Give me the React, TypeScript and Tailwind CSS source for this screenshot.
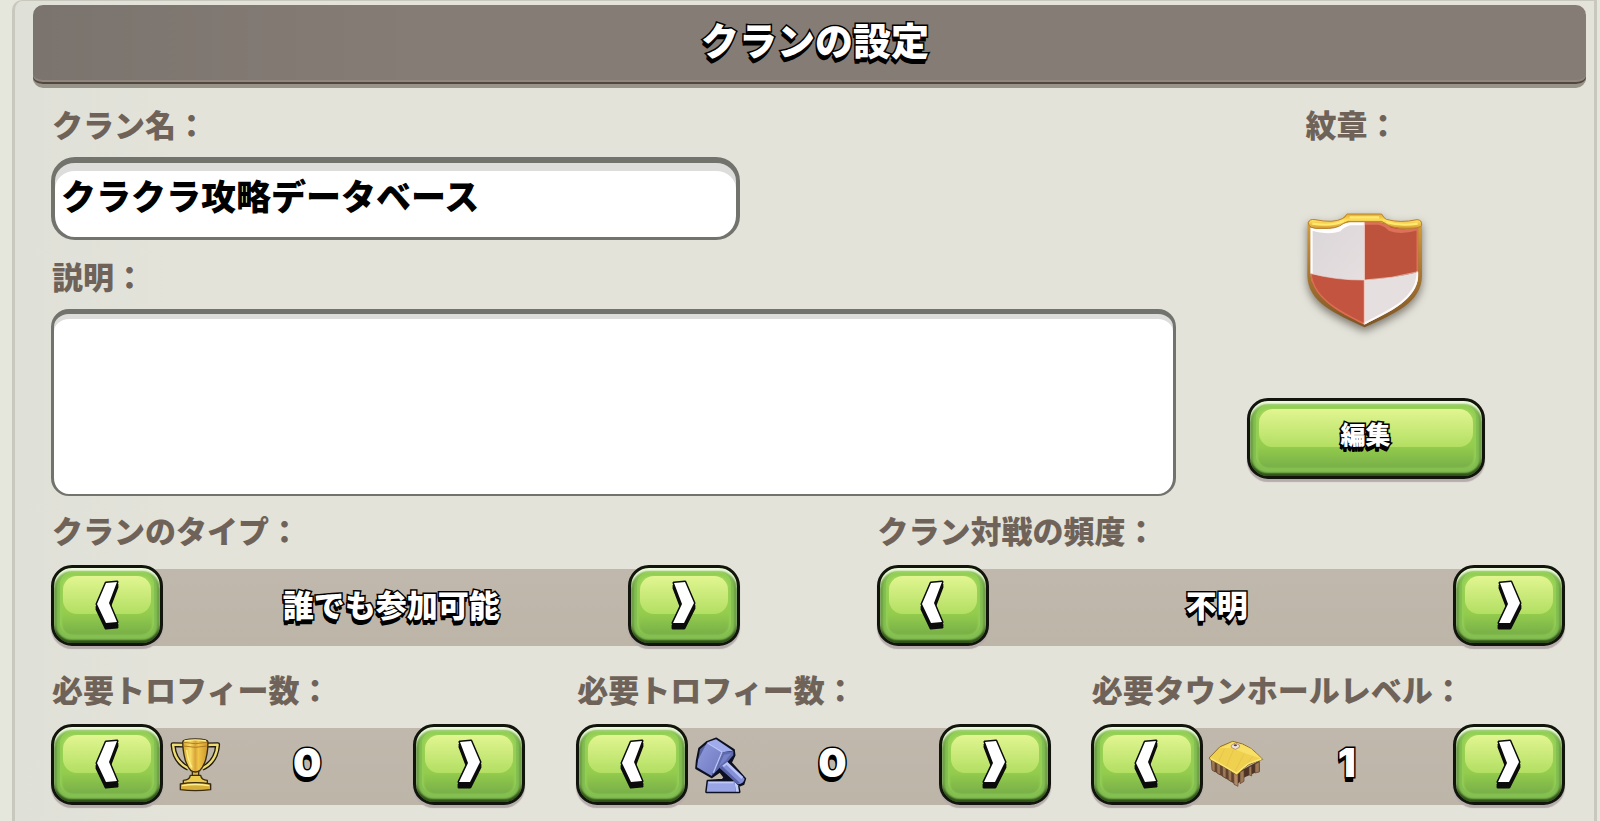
import React, { useState } from 'react';
import clsx from 'clsx';

const OUTLINED =
  'text-white [-webkit-text-stroke:3px_#000] [paint-order:stroke_fill] [text-shadow:-1px_2px_0_#000,-1px_4px_0_#000,-1px_5px_0_#000]';

const LABEL = 'block h-8 pl-px text-[31px] leading-7 font-black text-[#6f6359] whitespace-nowrap';

const FIELD = 'block w-full bg-white border-[#72736d] outline-none resize-none';

function GreenButton({
  label,
  className,
  onClick,
  children,
}: {
  label?: string;
  className?: string;
  onClick?: () => void;
  children: React.ReactNode;
}) {
  return (
    <button
      type="button"
      aria-label={label}
      onClick={onClick}
      className={clsx(
        'relative flex h-[81px] shrink-0 cursor-pointer items-center justify-center rounded-[21px] border-[3px] border-[#11150c]',
        'bg-linear-to-b from-[#a5d95c] via-[#94cd4d] via-60% to-[#6ea446]',
        'shadow-[0_3px_1px_#b5acab,inset_0_3px_2px_#f0fae0,inset_0_-3px_2px_#2f5219,inset_3px_0_2px_#6b9f40,inset_-3px_0_2px_#6b9f40,inset_0_-2px_0_6px_#84bf52,inset_0_0_2px_8px_#93cf55]',
        className
      )}
    >
      <span className="absolute inset-x-[9px] top-[8px] h-[38px] rounded-[14px] bg-linear-to-b from-[#e2f591] to-[#b2df62]" />
      <span className="relative">{children}</span>
    </button>
  );
}

function Chevron({ right }: { right?: boolean }) {
  const points = right ? '3,4 14,3 23,24 13,44 2,44 11,25' : '11,4 22,3 14,24 22,43 11,44 2,25';
  return (
    <svg width="25" height="53" viewBox="0 0 25 53" aria-hidden="true">
      <g fill="#0b0b0b" stroke="#0b0b0b" strokeWidth="3" strokeLinejoin="round">
        <polygon points={points} />
        <polygon points={points} transform="translate(0 3)" />
        <polygon points={points} transform="translate(0 5)" />
      </g>
      <polygon points={points} fill="#fff" />
    </svg>
  );
}

function Shield() {
  return (
    <svg
      width="122"
      height="130"
      viewBox="190 365 366 390"
      className="drop-shadow-[0_4px_4px_rgba(60,50,40,0.6)]"
      aria-hidden="true"
    >
      <defs>
        <linearGradient id="rim" x1="0" y1="0" x2="0" y2="1">
          <stop offset="0" stopColor="#d9a638" />
          <stop offset="0.35" stopColor="#b98337" />
          <stop offset="1" stopColor="#7d5525" />
        </linearGradient>
        <linearGradient id="rimTop" x1="0" y1="0" x2="0" y2="1">
          <stop offset="0" stopColor="#e2ab35" />
          <stop offset="0.45" stopColor="#ffe25c" />
          <stop offset="1" stopColor="#d99b32" />
        </linearGradient>
        <linearGradient id="silver" x1="0" y1="0" x2="1" y2="1">
          <stop offset="0" stopColor="#d9d5d8" />
          <stop offset="1" stopColor="#e7dfe0" />
        </linearGradient>
        <clipPath id="field">
          <path d="M206 415 Q250 424 285 413 Q303 403 325 399 H411 Q434 403 455 413 Q485 424 530 415 V560 C525 630 450 665 368 706 C285 665 211 625 206 550 Z" />
        </clipPath>
      </defs>
      <path
        d="M198 398 Q204 388 220 392 Q270 402 298 390 L316 374 H420 L432 390 Q475 402 524 392 Q540 390 541 402 V560 C539 640 460 672 369 714 C280 672 200 640 197 560 Z"
        fill="url(#rim)"
      />
      <g clipPath="url(#field)">
        <rect x="200" y="380" width="170" height="200" fill="url(#silver)" />
        <rect x="368" y="380" width="170" height="200" fill="#bd533d" />
        <path d="M200 551 Q285 573 369 572 V720 H200 Z" fill="#c35440" />
        <path d="M368 572 Q450 568 535 547 V720 H368 Z" fill="#e6dfdf" />
        <path
          d="M206 553 V415 Q258 432 292 420 Q303 407 325 401 H368"
          fill="none"
          stroke="#fffdfd"
          strokeWidth="14"
        />
        <path
          d="M368 401 H411 Q434 407 445 420 Q480 432 530 417 V547"
          fill="none"
          stroke="#dc7059"
          strokeWidth="11"
        />
        <path d="M206 553 C211 625 285 665 368 706" fill="none" stroke="#dd6e52" strokeWidth="9" />
        <path d="M530 547 V560 C525 630 450 665 368 706" fill="none" stroke="#fffafa" strokeWidth="12" />
        <path d="M206 552 Q285 573 369 572 Q450 568 530 547" fill="none" stroke="#ecd0ca" strokeWidth="2" />
        <path d="M368 395 V706" stroke="#f2cdc5" strokeWidth="3" />
      </g>
      <path
        d="M200 400 Q204 388 220 391 Q275 402 302 388 Q314 382 314 376 Q316 373 320 374 H416 Q421 373 422 377 Q424 384 434 390 Q475 402 526 391 Q541 391 540 408 Q535 418 495 417 Q450 418 430 402 L420 396 H320 L306 402 Q285 420 240 417 Q200 420 200 400 Z"
        fill="url(#rimTop)"
        stroke="#b9822f"
        strokeWidth="3"
      />
      <path d="M212 403 Q275 411 306 395 M324 384 H412 M434 398 Q475 411 528 403" fill="none" stroke="#ffe96f" strokeWidth="7" />
    </svg>
  );
}

function Trophy() {
  return (
    <svg width="54" height="57" viewBox="508 770 162 171" aria-hidden="true">
      <defs>
        <linearGradient id="cup" x1="0" y1="0" x2="1" y2="0">
          <stop offset="0" stopColor="#d3a32b" />
          <stop offset="0.3" stopColor="#f8dc62" />
          <stop offset="0.5" stopColor="#d9a43a" />
          <stop offset="0.62" stopColor="#f0c548" />
          <stop offset="1" stopColor="#c9962d" />
        </linearGradient>
      </defs>
      <g fill="none" strokeLinejoin="round">
        <path d="M553 797 L520 796 Q524 848 566 867 M620 797 L654 796 Q650 848 608 867" stroke="#221b0c" strokeWidth="15" />
        <path d="M553 797 L520 796 Q524 848 566 867 M620 797 L654 796 Q650 848 608 867" stroke="#eedc72" strokeWidth="7" />
      </g>
      <g stroke="#3a2c10" strokeWidth="4" strokeLinejoin="round">
        <path d="M578 872 H597 V892 H578 Z" fill="#dcb33d" />
        <path d="M549 788 Q549 779 587 779 Q625 779 625 788 Q624 850 600 874 Q587 882 574 874 Q551 850 549 788 Z" fill="url(#cup)" />
        <path d="M572 888 H603 Q605 902 623 903 V915 H551 V903 Q570 902 572 888 Z" fill="#edcb4c" />
        <path d="M542 914 Q587 906 633 914 V931 Q587 937 542 931 Z" fill="#d8ae3b" />
      </g>
      <path d="M552 789 Q587 797 622 789 M551 800 Q587 808 623 800" fill="none" stroke="#b17c25" strokeWidth="3" />
      <path d="M554 785 Q587 778 619 785 M561 812 Q566 847 577 864 M547 919 Q587 912 628 919" fill="none" stroke="#fff08e" strokeWidth="4" />
    </svg>
  );
}

function Hammer() {
  return (
    <svg width="54" height="58" viewBox="20 18 162 174" aria-hidden="true">
      <defs>
        <linearGradient id="hammerFace" x1="0" y1="0" x2="1" y2="1">
          <stop offset="0" stopColor="#929de0" />
          <stop offset="1" stopColor="#6d78bd" />
        </linearGradient>
      </defs>
      <path
        d="M29 92 L36 56 L60 36 L87 26 L139 60 L141 76 L130 98 L173 146 L168 162 L153 168 L156 186 H57 L61 153 L106 150 L112 142 L98 124 L73 141 L27 115 Z"
        fill="#0d1020"
        stroke="#0d1020"
        strokeWidth="7"
        strokeLinejoin="round"
      />
      <path d="M62 154 H142 L145 185 H58 Z" fill="#9aa5e6" />
      <path d="M142 155 L152 166 L155 185 H145 Z" fill="#c4cefb" />
      <path d="M64 158 L138 158" stroke="#c0caf8" strokeWidth="4" />
      <path d="M96 112 L116 94 L172 146 Q169 161 152 163 Z" fill="#8490d8" />
      <path d="M107 108 L118 99 L165 144" fill="none" stroke="#b8c3fa" strokeWidth="8" strokeLinejoin="round" />
      <path d="M97 114 L104 108 L158 159 L150 162 Z" fill="#5a64a8" />
      <path d="M38 58 L60 40 L54 66 L32 92 Z" fill="#59639f" />
      <path d="M60 37 L104 64 L73 138 L29 112 L32 90 Z" fill="url(#hammerFace)" />
      <path d="M60 37 L86 28 L137 62 L106 67 Z" fill="#a0abeb" />
      <path d="M105 67 L138 63 L138 76 L120 96 L100 110 L73 138 Z" fill="#5e69ae" />
      <path d="M110 74 L132 70 L114 93 L94 110 Z" fill="#7682c8" />
      <path d="M61 39 L104 66 L78 128" fill="none" stroke="#bcc6fa" strokeWidth="4" strokeLinejoin="round" />
    </svg>
  );
}

function Hut() {
  return (
    <svg width="56" height="50" viewBox="22 34 168 150" aria-hidden="true">
      <g strokeLinejoin="round">
        <path d="M32 92 L108 132 V170 L34 124 Z" fill="#63452f" />
        <path d="M106 134 L176 96 L177 126 L132 146 L108 168 Z" fill="#4d3225" />
        <g fill="#9d7855" stroke="#5c4030" strokeWidth="2">
          <path d="M32 94 L43 98 V130 L34 124 Z" />
          <path d="M48 102 L59 107 V139 L49 133 Z" />
          <path d="M65 112 L76 118 V149 L66 143 Z" />
          <path d="M82 122 L93 127 V159 L83 153 Z" />
          <path d="M99 132 L112 135 V173 L100 167 Z" fill="#b18a65" />
          <path d="M118 130 L130 124 V158 L118 165 Z" />
          <path d="M145 116 L153 112 V142 L145 138 Z" />
          <path d="M163 106 L176 99 V130 L163 133 Z" />
        </g>
        <path
          d="M25 88 L58 54 L96 38 L126 46 L152 60 L168 74 L186 92 L166 99 L144 108 L126 122 L108 139 L74 116 L30 94 Z"
          fill="#efd04f"
          stroke="#927026"
          strokeWidth="3"
        />
        <path d="M96 40 L126 48 L152 61 L184 91 L140 76 L92 58 L60 58 Z" fill="#f8df66" />
        <path d="M31 90 L108 134 L144 104 L182 91" fill="none" stroke="#fae97c" strokeWidth="4" />
        <path
          d="M72 60 L54 98 M98 64 L78 112 M130 76 L104 126 M156 84 L140 104"
          fill="none"
          stroke="#e2c048"
          strokeWidth="2"
        />
      </g>
      <path d="M92 50 L104 43 L116 49 V56 L104 62 L92 56 Z" fill="#efe4df" stroke="#91746a" strokeWidth="2" />
      <ellipse cx="104" cy="50" rx="5" ry="3" fill="#6c3d35" />
    </svg>
  );
}

interface StepperProps {
  label: string;
  values: string[];
  icon?: React.ReactNode;
  className?: string;
}

function Stepper({ label, values, icon, className }: StepperProps) {
  const [index, setIndex] = useState(0);
  const step = (by: number) => setIndex((index + by + values.length) % values.length);

  return (
    <div role="group" aria-label={label} className={clsx('min-w-0 flex-1', className)}>
      <span className={LABEL}>{label}</span>
      <div className="mt-[17px] flex items-center justify-between">
        <GreenButton label="前へ" className="w-28" onClick={() => step(-1)}>
          <Chevron />
        </GreenButton>
        <div className="-mx-6 mt-1 flex h-[77px] flex-1 items-center bg-linear-to-b from-[#c0b8ac] to-[#bdb5a8] px-6">
          {icon && <span className="flex w-[66px] shrink-0 justify-center pb-1">{icon}</span>}
          <output
            className={clsx(
              'flex-1 pb-2 text-center leading-10 font-black whitespace-nowrap',
              OUTLINED,
              icon ? "pr-7 font-['Inter'] text-[40px]" : 'pr-2 text-[31px]'
            )}
          >
            {values[index]}
          </output>
        </div>
        <GreenButton label="次へ" className="w-28" onClick={() => step(1)}>
          <Chevron right />
        </GreenButton>
      </div>
    </div>
  );
}

const clanTypes = ['誰でも参加可能', '招待のみ', '非公開'];
const warFrequencies = ['不明', '常時', '週に2回', '週に1回', 'まれ', 'しない'];
const trophies = Array.from({ length: 56 }, (_, i) => String(i * 100));
const townHalls = Array.from({ length: 17 }, (_, i) => String(i + 1));

export default function App() {
  return (
    <div className="min-h-screen bg-[#e5e6dc] pr-[3px] pl-3 font-['Noto_Sans_CJK_JP',sans-serif]">
      <main className="min-h-screen rounded-tl-[10px] border-x-[3px] border-t border-[#c8c8bf] bg-[#e3e3da] bg-linear-to-r from-[#dfe0d7] to-[#e3e3da] to-10% pt-1 pr-2 pl-[18px]">
        <header className="mb-[22px] flex h-[83px] items-center justify-center rounded-[10px] border-b-[4px] border-[#98948a] bg-linear-to-r from-[#7b746e] to-[#857c75] to-25% pr-px pb-3 pl-3 shadow-[inset_0_-2px_0_#51483f,inset_0_-4px_0_#91877e]">
          <h1 className={clsx('text-[38px] leading-[48px] font-black', OUTLINED)}>クランの設定</h1>
        </header>

        <form className="pr-[21px] pl-[18px]" onSubmit={(e) => e.preventDefault()}>
          <section className="flex">
            <div className="flex-1">
              <label htmlFor="clan-name" className={LABEL}>
                クラン名：
              </label>
              <input
                id="clan-name"
                type="text"
                defaultValue="クラクラ攻略データベース"
                className={clsx(
                  FIELD,
                  'mt-[15px] h-[83px] max-w-[689px] rounded-[24px] border-4 border-t-[6px] border-b-[3px] pb-3 pl-1.5 text-[35px] leading-10 font-black text-black shadow-[inset_0_8px_0_#dddddc]'
                )}
              />
              <label htmlFor="clan-description" className={clsx(LABEL, 'mt-[22px]')}>
                説明：
              </label>
              <textarea
                id="clan-description"
                className={clsx(
                  FIELD,
                  'mt-[15px] h-[187px] rounded-[18px] border-[3px] border-t-[5px] border-b-2 px-3 pt-3 text-[31px] shadow-[inset_0_5px_0_#dddddc]'
                )}
              />
            </div>

            <div className="flex w-[389px] shrink-0 flex-col items-center pr-2.5">
              <div className="w-[122px]">
                <span className={LABEL}>紋章：</span>
                <div className="mt-[69px]">
                  <Shield />
                </div>
              </div>
              <GreenButton className="mt-[57px] w-[238px]">
                <span className={clsx('block pb-3 text-[25px] leading-8 font-black', OUTLINED)}>編集</span>
              </GreenButton>
            </div>
          </section>

          <section className="mt-5 flex gap-[137px]">
            <Stepper label="クランのタイプ：" values={clanTypes} />
            <Stepper label="クラン対戦の頻度：" values={warFrequencies} />
          </section>

          <section className="mt-[29px] flex gap-10">
            <Stepper label="必要トロフィー数：" values={trophies} icon={<Trophy />} className="mr-[11px]" />
            <Stepper label="必要トロフィー数：" values={trophies} icon={<Hammer />} />
            <Stepper label="必要タウンホールレベル：" values={townHalls} icon={<Hut />} />
          </section>
        </form>
      </main>
    </div>
  );
}
